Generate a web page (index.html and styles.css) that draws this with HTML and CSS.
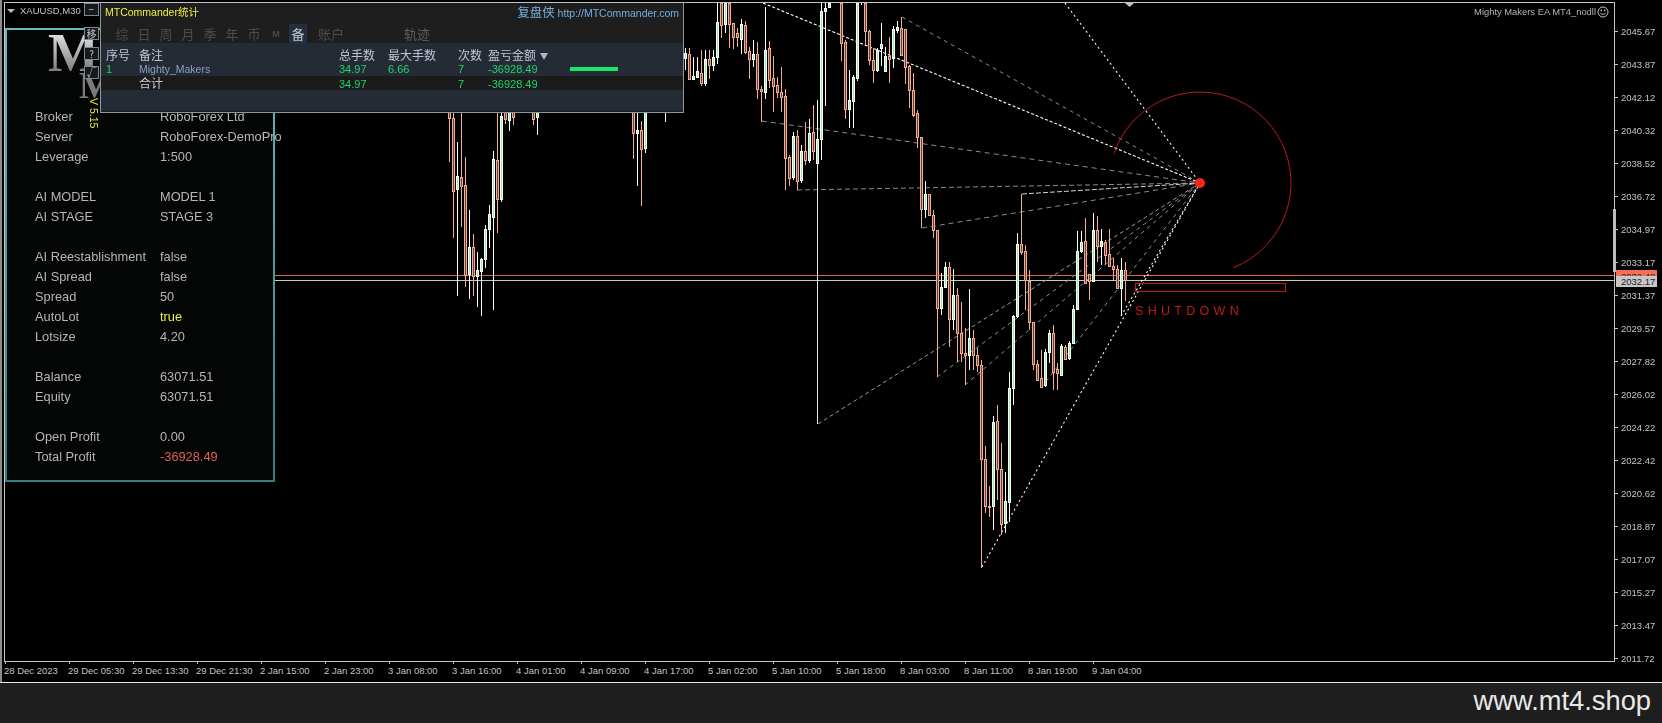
FILE: index.html
```html
<!DOCTYPE html>
<html lang="en">
<head>
  <meta charset="UTF-8">
  <title>XAUUSD,M30</title>
  <link rel="stylesheet" href="styles.css">
</head>
<body>

  <!-- TERMINAL: chart window -->
  <div class="terminal">
    <div class="plot">
      <canvas id="chart" width="1609" height="658"></canvas>
    </div>

    <div class="price-axis">
      <span>2045.67</span><span>2043.87</span><span>2042.12</span><span>2040.32</span>
      <span>2038.52</span><span>2036.72</span><span>2034.97</span><span>2033.17</span>
      <span>2031.37</span><span>2029.57</span><span>2027.82</span><span>2026.02</span>
      <span>2024.22</span><span>2022.42</span><span>2020.62</span><span>2018.87</span>
      <span>2017.07</span><span>2015.27</span><span>2013.47</span><span>2011.72</span>
      <div class="scroll-mark"></div>
      <div class="tag tag-red">2032.48</div>
      <div class="tag tag-grey">2032.17</div>
    </div>

    <div class="time-axis">
      <span>28 Dec 2023</span><span>29 Dec 05:30</span><span>29 Dec 13:30</span><span>29 Dec 21:30</span>
      <span>2 Jan 15:00</span><span>2 Jan 23:00</span><span>3 Jan 08:00</span><span>3 Jan 16:00</span>
      <span>4 Jan 01:00</span><span>4 Jan 09:00</span><span>4 Jan 17:00</span><span>5 Jan 02:00</span>
      <span>5 Jan 10:00</span><span>5 Jan 18:00</span><span>8 Jan 03:00</span><span>8 Jan 11:00</span>
      <span>8 Jan 19:00</span><span>9 Jan 04:00</span>
    </div>

    <!-- things lying on the chart -->
    <div class="symbol"><span class="symbol-arrow"></span>XAUUSD,M30</div>
    <div class="ea-name">
      Mighty Makers EA MT4_nodll
      <svg class="smiley" width="12" height="12" viewBox="0 0 12 12">
        <circle cx="6" cy="6" r="5" fill="none" stroke="#c4c4c4"/>
        <path d="M3.4 7.2c.7 1.4 4.5 1.4 5.2 0" fill="none" stroke="#c4c4c4"/>
        <rect x="3.6" y="3.6" width="1.4" height="1.6" fill="#c4c4c4"/>
        <rect x="7" y="3.6" width="1.4" height="1.6" fill="#c4c4c4"/>
      </svg>
    </div>
    <div class="shutdown">SHUTDOWN</div>

    <!-- EA PANEL -->
    <div class="ea-panel">
      <div class="logo">
        <div class="logo-big">M</div>
        <div class="logo-small">M</div>
      </div>
      <div class="version">V 5.15</div>

      <div class="info-group">
        <div class="info-row"><span class="info-key">Broker</span><span>RoboForex Ltd</span></div>
        <div class="info-row"><span class="info-key">Server</span><span>RoboForex-DemoPro</span></div>
        <div class="info-row"><span class="info-key">Leverage</span><span>1:500</span></div>
      </div>
      <div class="info-group">
        <div class="info-row"><span class="info-key">AI MODEL</span><span>MODEL 1</span></div>
        <div class="info-row"><span class="info-key">AI STAGE</span><span>STAGE 3</span></div>
      </div>
      <div class="info-group">
        <div class="info-row"><span class="info-key">AI Reestablishment</span><span>false</span></div>
        <div class="info-row"><span class="info-key">AI Spread</span><span>false</span></div>
        <div class="info-row"><span class="info-key">Spread</span><span>50</span></div>
        <div class="info-row"><span class="info-key">AutoLot</span><span class="val-yellow">true</span></div>
        <div class="info-row"><span class="info-key">Lotsize</span><span>4.20</span></div>
      </div>
      <div class="info-group">
        <div class="info-row"><span class="info-key">Balance</span><span>63071.51</span></div>
        <div class="info-row"><span class="info-key">Equity</span><span>63071.51</span></div>
      </div>
      <div class="info-group">
        <div class="info-row"><span class="info-key">Open Profit</span><span>0.00</span></div>
        <div class="info-row"><span class="info-key">Total Profit</span><span class="val-red">-36928.49</span></div>
      </div>
    </div>

    <div class="min-btn">−</div>
    <div class="side-btns">
      <div class="side-btn">移</div>
      <div class="side-btn">?</div>
      <div class="side-btn">√</div>
    </div>

    <!-- MTCOMMANDER PANEL -->
    <div class="stats">
      <div class="stats-title">
        <span class="stats-name">MTCommander统计</span>
        <span class="stats-link"><span class="stats-cn">复盘侠</span> http://MTCommander.com</span>
      </div>
      <div class="stats-tabs">
        <span class="tab">综</span><span class="tab">日</span><span class="tab">周</span>
        <span class="tab">月</span><span class="tab">季</span><span class="tab">年</span>
        <span class="tab">币</span><span class="tab tab-small">M</span><span class="tab tab-on">备</span>
        <span class="tab tab-wide">账户</span><span class="tab tab-far">轨迹</span>
      </div>
      <div class="stats-body">
        <div class="stats-row stats-head">
          <span>序号</span><span>备注</span><span>总手数</span><span>最大手数</span><span>次数</span>
          <span>盈亏金额 <span class="sort-arrow"></span></span><span></span>
        </div>
        <div class="stats-row stats-data">
          <span>1</span><span class="stats-note">Mighty_Makers</span><span>34.97</span><span>6.66</span><span>7</span>
          <span>-36928.49</span><span class="bar"></span>
        </div>
        <div class="stats-row stats-data stats-sum">
          <span></span><span class="stats-total">合计</span><span>34.97</span><span></span><span>7</span>
          <span>-36928.49</span><span></span>
        </div>
      </div>
    </div>
  </div>

  <!-- BRAND STRIP -->
  <div class="brand">www.mt4.shop</div>

  <script src="chart.js"></script>
</body>
</html>
```

FILE: styles.css
```css
/* PAGE */
body {
  margin: 0;
  background-color: #1e1e1e;
  font-family: "Liberation Sans", Arial, sans-serif;
  overflow: hidden;
}

/* TERMINAL: black chart window with plot, price axis and time axis */
.terminal {
  position: relative;
  box-sizing: border-box;
  width: 1662px;
  height: 683px;
  padding: 2px 0 0 4px;
  background-color: #000;
  border-bottom: 1px solid #e6e6e6;
  box-shadow: inset 2px 0 0 #8c8c8c;
  display: grid;
  grid-template-columns: 1611px 47px;
  grid-template-rows: 660px 20px;
}

.plot {
  border: 1px solid #c4c4c4;
  line-height: 0;
}

/* PRICE AXIS */
.price-axis {
  position: relative;
  padding-top: 13px;
  display: grid;
  grid-auto-rows: 33px;
  color: #c4c4c4;
  font-size: 9.5px;
}

.price-axis span {
  position: relative;
  padding-left: 6px;
  line-height: 33px;
}

.price-axis span::before {
  content: "";
  position: absolute;
  left: 0;
  top: 16px;
  width: 3px;
  height: 1px;
  background-color: #c4c4c4;
}

.scroll-mark {
  position: absolute;
  left: -2px;
  top: 207px;
  width: 3px;
  height: 63px;
  background-color: #bdbdbd;
}

.tag {
  position: absolute;
  left: 1px;
  width: 41px;
  padding-left: 5px;
  box-sizing: border-box;
  font-size: 9.5px;
  color: #222;
}

.tag-red {
  top: 268px;
  height: 9px;
  line-height: 14px;
  overflow: hidden;
  background-color: #f2705a;
}

.tag-grey {
  top: 274px;
  height: 11px;
  line-height: 12px;
  background-color: #c8c8c8;
}

/* TIME AXIS */
.time-axis {
  grid-column: 1 / 3;
  display: grid;
  grid-template-columns: repeat(18, 64px);
  color: #c4c4c4;
  font-size: 9.5px;
  line-height: 17px;
}

.time-axis span {
  position: relative;
  white-space: nowrap;
}

.time-axis span::before {
  content: "";
  position: absolute;
  left: 1px;
  top: -1px;
  width: 1px;
  height: 3px;
  background-color: #c4c4c4;
}

/* CHART OVERLAYS */
.symbol {
  position: absolute;
  left: 7px;
  top: 4px;
  display: flex;
  align-items: center;
  gap: 5px;
  color: #c4c4c4;
  font-size: 9.5px;
  line-height: 13px;
}

.symbol-arrow {
  width: 0;
  height: 0;
  border-left: 4px solid transparent;
  border-right: 4px solid transparent;
  border-top: 4px solid #bbb;
}

.ea-name {
  position: absolute;
  right: 53px;
  top: 5px;
  display: flex;
  align-items: center;
  gap: 1px;
  color: #b4b4b4;
  font-size: 9.4px;
  line-height: 14px;
}

.shutdown {
  position: absolute;
  left: 1135px;
  top: 304px;
  color: #c01c1c;
  font-size: 12.5px;
  line-height: 14px;
  letter-spacing: 4.3px;
}

/* EA PANEL */
.ea-panel {
  position: absolute;
  left: 5px;
  top: 28px;
  box-sizing: border-box;
  width: 270px;
  height: 454px;
  padding: 1px 0 0 28px;
  background-color: #040505;
  border: 2px solid;
  border-image: linear-gradient(#6bb8c2, #2f7f7c) 1;
  color: #b6b6b6;
  font-size: 12.8px;
}

.logo {
  height: 76px;
  margin-left: 13px;
  font-family: "Liberation Serif", serif;
  font-weight: bold;
}

.logo-big {
  height: 40px;
  font-size: 54px;
  line-height: 44px;
  background: linear-gradient(#e8e8e8, #7d7d7d);
  background-clip: text;
  -webkit-background-clip: text;
  color: transparent;
}

.logo-small {
  margin-left: 31px;
  font-size: 37px;
  line-height: 30px;
  color: #7b7b7b;
}

.version {
  position: absolute;
  left: 81px;
  top: 68px;
  writing-mode: vertical-rl;
  color: #f4f43c;
  font-size: 10.5px;
  line-height: 12px;
}

.info-group {
  margin-bottom: 20px;
}

.info-row {
  display: flex;
  height: 20px;
  line-height: 20px;
  white-space: nowrap;
}

.info-key {
  flex: none;
  width: 125px;
}

.val-yellow {
  color: #eef04a;
}

.val-red {
  color: #e2604e;
}

/* SMALL BUTTONS */
.min-btn,
.side-btn {
  box-sizing: border-box;
  width: 15px;
  height: 13px;
  background-color: #16191d;
  border: 1px solid #7c8790;
  color: #c4c4c4;
  font-size: 10px;
  line-height: 11px;
  text-align: center;
}

.min-btn {
  position: absolute;
  left: 84px;
  top: 3px;
}

.side-btns {
  position: absolute;
  left: 84px;
  top: 27px;
  display: flex;
  flex-direction: column;
  gap: 6.5px;
}

.side-btn {
  font-family: "Noto Sans CJK SC", sans-serif;
}

/* MTCOMMANDER PANEL */
.stats {
  position: absolute;
  left: 100px;
  top: 2px;
  box-sizing: border-box;
  width: 584px;
  height: 111px;
  background-color: #1e1e1e;
  border: 1px solid #8b98a2;
  border-top-color: #c4c4c4;
  font-family: "Liberation Sans", "Noto Sans CJK SC", sans-serif;
}

.stats-title {
  display: flex;
  justify-content: space-between;
  align-items: center;
  height: 17px;
  padding: 0 4px 4px 4px;
  font-size: 10.5px;
}

.stats-name {
  color: #f2ef3e;
}

.stats-link {
  color: #74aede;
}

.stats-cn {
  font-size: 12.5px;
}

.stats-tabs {
  display: flex;
  height: 19px;
  padding-left: 10px;
  color: #4c4c4c;
  font-size: 13px;
  line-height: 21px;
}

.tab {
  width: 22px;
  text-align: center;
}

.tab-small {
  font-size: 9px;
  font-weight: bold;
}

.tab-on {
  width: 18px;
  margin: 0 2px;
  background-color: #243040;
  color: #c0cad6;
}

.tab-wide {
  width: 44px;
}

.tab-far {
  margin-left: 42px;
  width: 44px;
  color: #5e5e5e;
}

.stats-body {
  height: 68px;
  background-color: #252b35;
}

.stats-row {
  display: grid;
  grid-template-columns: 33px 200px 49px 70px 30px 82px 60px;
  padding-left: 5px;
}

.stats-head {
  height: 19px;
  color: #bcc6d2;
  font-size: 12px;
  line-height: 26px;
}

.stats-data {
  height: 14px;
  color: #1fd468;
  font-size: 11px;
  line-height: 14px;
}

.stats-sum {
  line-height: 16px;
  background-color: #1b1b1b;
}

.stats-note {
  color: #8aa0c4;
  font-size: 10.5px;
}

.stats-total {
  color: #c4ccd6;
  font-size: 12px;
}

.sort-arrow {
  display: inline-block;
  margin-left: 1px;
  width: 0;
  height: 0;
  border-left: 4px solid transparent;
  border-right: 4px solid transparent;
  border-top: 7px solid #a8b6d0;
}

.bar {
  align-self: center;
  width: 48px;
  height: 4px;
  background-color: #16e868;
}

/* BRAND STRIP */
.brand {
  height: 40px;
  padding-right: 11px;
  color: #e8e8e8;
  font-size: 27.3px;
  line-height: 35px;
  text-align: right;
}
```

FILE: chart.js
```js
// Draws the candles and the fan of dashed lines on the chart canvas.
// All coordinates below are page pixels, the canvas sits at (5,3).
const canvas = document.getElementById("chart");
const ctx = canvas.getContext("2d");
ctx.translate(-5, -3);

const BEAR = "#f4ac90";
const BULL = "#98ee9f";

// x, high, body top, body bottom, low, 1 = up candle
const candles = [
  [449,100,100,118,162,0],[453,100,118,191,238,0],[457,142,176,189,296,1],[461,100,177,186,227,0],
  [465,157,185,275,287,0],[469,210,247,274,299,1],[473,234,247,276,296,0],[477,252,270,276,307,1],
  [481,258,259,271,316,1],[485,225,229,259,268,1],[489,205,214,229,248,1],[493,151,159,217,310,1],
  [497,113,160,199,233,0],[501,100,116,199,202,1],[505,100,100,119,124,0],[509,100,100,120,131,1],
  [513,100,100,117,125,0],[533,100,100,119,125,0],[537,100,100,117,135,1],[633,100,100,133,159,0],
  [637,113,130,133,186,1],[641,121,130,149,206,0],[645,100,100,148,153,1],[665,100,100,100,122,1],
  [685,48,53,58,70,1],[689,48,54,79,80,0],[693,57,76,79,80,1],[697,57,71,77,78,1],
  [701,50,73,83,86,0],[705,50,59,83,86,1],[709,50,59,65,79,0],[713,50,57,65,71,1],
  [717,3,22,57,64,1],[721,3,3,25,38,0],[725,3,3,24,33,1],[729,3,3,24,48,0],
  [733,23,23,37,49,0],[737,28,33,37,47,0],[741,19,24,39,54,1],[745,21,25,52,54,0],
  [749,47,51,59,79,0],[753,40,54,59,67,1],[757,42,54,89,99,0],[761,86,89,91,122,0],
  [765,7,50,92,99,1],[769,41,48,80,88,0],[773,56,78,86,112,0],[777,77,85,92,98,0],
  [781,67,92,97,112,0],[785,89,96,158,190,0],[789,155,157,178,186,0],[793,132,136,177,180,1],
  [797,130,136,181,190,0],[801,145,151,180,183,1],[805,122,151,160,165,0],[809,119,133,160,163,1],
  [813,105,132,151,160,0],[817,100,139,163,424,1],[821,3,11,139,160,1],[825,3,8,11,106,1],
  [829,3,3,7,7,1],[841,3,3,43,61,0],[845,40,42,109,119,0],[849,70,100,109,128,1],
  [853,75,77,101,128,1],[857,3,3,78,81,1],[861,3,3,3,5,1],[865,3,3,31,45,0],
  [869,30,31,60,65,0],[873,48,60,70,83,0],[877,48,50,70,72,1],[881,23,44,48,66,1],
  [885,47,56,71,72,1],[889,37,56,59,83,0],[893,26,29,58,68,1],[897,21,27,30,33,1],
  [901,17,28,55,55,0],[905,29,29,67,84,0],[909,65,66,90,108,0],[913,73,90,115,117,0],
  [917,110,113,137,148,0],[921,137,137,209,228,0],[925,181,194,209,218,1],[929,194,194,215,216,0],
  [933,210,215,230,238,0],[937,230,230,308,377,0],[941,273,287,308,315,1],[945,262,267,287,287,1],
  [949,262,267,319,347,0],[953,269,295,319,330,1],[957,288,295,333,362,0],[961,302,333,353,362,0],
  [965,328,353,355,385,0],[969,289,338,355,370,1],[973,330,338,355,370,0],[977,348,355,365,372,0],
  [981,360,365,459,568,0],[985,446,459,506,513,0],[989,486,506,507,517,0],[993,416,422,506,530,1],
  [997,405,421,469,500,0],[1001,443,469,524,535,0],[1005,472,501,523,533,1],[1009,372,388,502,522,1],
  [1013,315,316,388,405,1],[1017,233,244,316,318,1],[1021,194,244,252,255,0],[1025,245,251,280,310,0],
  [1029,270,281,322,330,0],[1033,322,322,364,370,0],[1037,360,364,380,380,0],[1041,350,378,387,388,0],
  [1045,349,352,385,387,1],[1049,330,333,352,363,1],[1053,325,333,372,390,0],[1057,363,369,373,390,0],
  [1061,344,346,375,375,1],[1065,345,347,359,360,0],[1069,341,343,358,360,1],[1073,305,309,343,343,1],
  [1077,231,251,309,310,1],[1081,231,242,251,253,1],[1085,218,241,283,283,0],[1089,274,274,281,300,0],
  [1093,213,230,281,281,1],[1097,216,230,246,262,0],[1101,229,241,246,265,1],[1105,240,242,255,265,0],
  [1109,229,254,266,267,0],[1113,258,266,269,280,0],[1117,265,269,288,288,0],[1121,258,270,288,316,1],
  [1125,262,270,280,301,0]
];

// end of each fan line, all of them meet at the red dot
const fan = [
  [763,3,"#ffffff",[3,2],1.1],
  [902,17,"#8c8c8c",[4,4],1],
  [762,121,"#8c8c8c",[5,4],1],
  [797,190,"#8c8c8c",[5,3],1],
  [1022,194,"#d8d8d8",[5,2],1],
  [922,228,"#8c8c8c",[5,4],1],
  [818,424,"#9a9a9a",[4,3],1],
  [937,377,"#8c8c8c",[4,4],1],
  [965,385,"#8c8c8c",[4,4],1],
  [1041,388,"#8c8c8c",[4,4],1],
  [982,567,"#ffffff",[2,3],1.1],
  [1121,316,"#ffffff",[2,3],1.1],
  [1065,3,"#ffffff",[2,3],1.1]
];

const focusX = 1200;
const focusY = 183;

// level lines
ctx.fillStyle = "#e2604e";
ctx.fillRect(274, 275, 1340, 1);
ctx.fillStyle = "#c8c8c8";
ctx.fillRect(274, 280, 1340, 1);

// fan
fan.forEach(function (line) {
  ctx.beginPath();
  ctx.setLineDash(line[3]);
  ctx.strokeStyle = line[2];
  ctx.lineWidth = line[4];
  ctx.moveTo(line[0], line[1]);
  ctx.lineTo(focusX, focusY);
  ctx.stroke();
});
ctx.setLineDash([]);
ctx.lineWidth = 1;

// candles
candles.forEach(function (c) {
  const x = c[0], up = c[5];
  ctx.fillStyle = up ? "#ffffff" : BEAR;
  ctx.fillRect(x, c[1], 1, c[4] - c[1]);
  if (c[3] > c[2]) {
    ctx.fillRect(x - 1, c[2], 3, c[3] - c[2] + 1);
    ctx.fillStyle = up ? BULL : "#6b4436";
    ctx.fillRect(x, c[2] + 1, 1, c[3] - c[2] - 1);
  }
});

// long white line under the candle at 817
ctx.fillStyle = "#e8e8e8";
ctx.fillRect(817, 163, 1, 261);

// red arc and dot
ctx.beginPath();
ctx.strokeStyle = "#b81c1c";
ctx.arc(focusX, focusY, 91, Math.atan2(154 - focusY, 1113 - focusX), Math.atan2(267 - focusY, 1233 - focusX));
ctx.stroke();

ctx.beginPath();
ctx.fillStyle = "#ff2020";
ctx.arc(focusX, focusY, 5, 0, Math.PI * 2);
ctx.fill();

// shutdown box
ctx.strokeStyle = "#c01c1c";
ctx.strokeRect(1135.5, 283.5, 150, 8);

// chart shift marker on the top edge
ctx.beginPath();
ctx.fillStyle = "#c4c4c4";
ctx.moveTo(1125, 3);
ctx.lineTo(1134, 3);
ctx.lineTo(1129.5, 7);
ctx.fill();
```
